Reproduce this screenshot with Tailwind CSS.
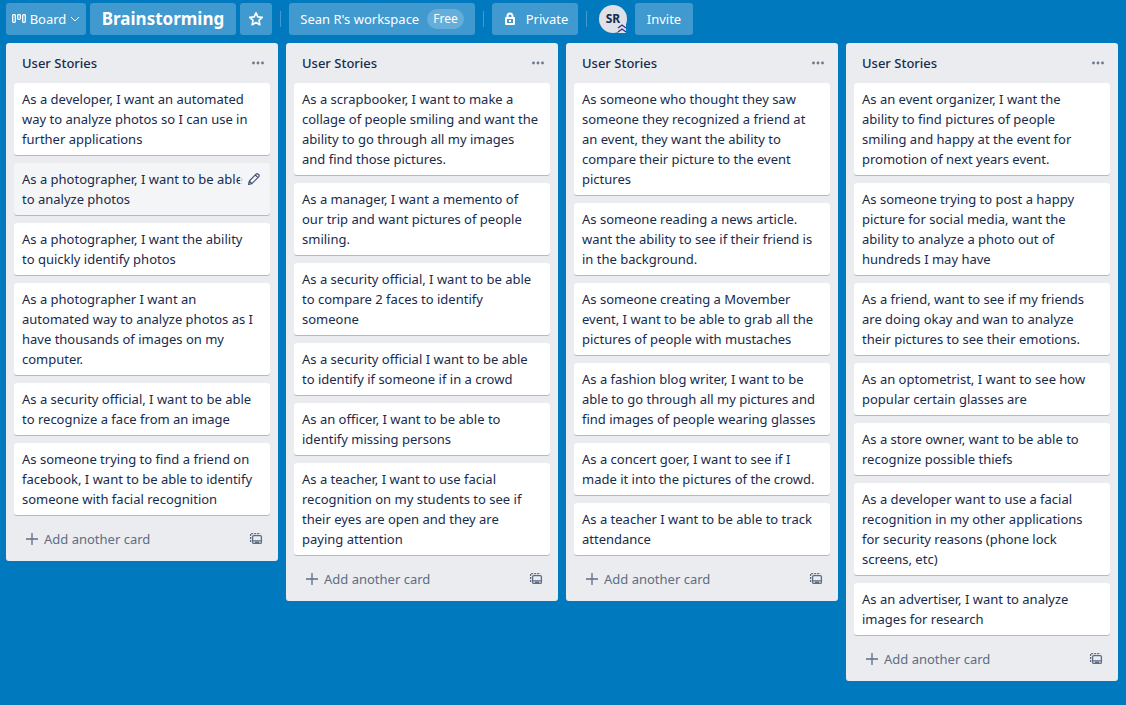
<!DOCTYPE html>
<html lang="en">
<head>
<meta charset="utf-8">
<title>Brainstorming</title>
<script src="https://cdn.jsdelivr.net/npm/@tailwindcss/browser@4"></script>
</head>
<body class="flex min-h-screen flex-col bg-[#0079bf] font-['Segoe_UI','Noto_Sans',sans-serif] text-[13px] leading-5 text-[#172b4d]">
<header class="flex h-[43px] shrink-0 items-start gap-1 px-1.5 pt-[3px] text-white">
  <button class="flex h-8 w-20 items-center justify-center gap-1 rounded-[3px] bg-[#4099cf]">
    <svg class="h-3 w-3.5 shrink-0" viewBox="0 0 14 12" fill="none" stroke="currentColor" stroke-width="1.3"><rect x=".7" y="1.7" width="2.6" height="7.6" rx=".7"/><rect x="5.7" y="1.7" width="2.6" height="4.6" rx=".7"/><rect x="10.7" y="1.7" width="2.6" height="7.6" rx=".7"/></svg>
    Board
    <svg class="h-2 w-2.5 shrink-0" viewBox="0 0 10 8" fill="none" stroke="currentColor" stroke-width="1"><path d="m1 2 4 4 4-4"/></svg>
  </button>
  <h1 class="flex h-8 w-[146px] items-center justify-center rounded-[3px] bg-[#4099cf] text-[17px] font-bold">Brainstorming</h1>
  <button aria-label="Star board" class="flex size-8 items-center justify-center rounded-[3px] bg-[#4099cf]">
    <svg class="size-4" viewBox="0 0 16 16" fill="none" stroke="currentColor" stroke-width="1.7" stroke-linejoin="round"><path d="m8 1.8 1.8 4 4.4.5-3.2 3 .8 4.4L8 11.5l-3.8 2.2.8-4.4-3.2-3 4.4-.5z"/></svg>
  </button>
  <span class="mx-1 mt-2 h-4 w-px bg-[#4099cf]"></span>
  <button class="flex h-8 w-[186px] items-center justify-center gap-2 rounded-[3px] bg-[#4099cf]">Sean R's workspace <span class="rounded-full bg-[#66add9] px-1.5 text-xs leading-5">Free</span></button>
  <span class="mx-1 mt-2 h-4 w-px bg-[#4099cf]"></span>
  <button class="flex h-8 w-[86px] items-center justify-center gap-2 rounded-[3px] bg-[#4099cf]">
    <svg class="size-4 shrink-0" viewBox="0 0 16 16"><path d="M5.5 7V5a2.5 2.5 0 0 1 5 0v2" fill="none" stroke="currentColor" stroke-width="2"/><path fill="currentColor" fill-rule="evenodd" d="M4 6h8a1 1 0 0 1 1 1v6a1 1 0 0 1-1 1H4a1 1 0 0 1-1-1V7a1 1 0 0 1 1-1zm1 2v4h6V8z"/><path fill="currentColor" d="M7 9h2v2H7z"/></svg>
    Private
  </button>
  <span class="mx-1 mt-2 h-4 w-px bg-[#4099cf]"></span>
  <button aria-label="Sean R" class="relative mx-1 mt-0.5 size-7 rounded-full bg-[#dfe1e6] text-xs font-bold text-[#172b4d]">SR
    <svg class="absolute right-0 bottom-0 size-2.5" viewBox="0 0 10 10"><path fill="#dfe1e6" d="M1 1h8v9H1z"/><path fill="none" stroke="#403294" stroke-width="1.4" d="m1 5 4-3 4 3M1 9l4-3 4 3"/></svg>
  </button>
  <button class="flex h-8 w-[58px] items-center justify-center rounded-[3px] bg-[#4099cf]">Invite</button>
</header>
<main id="board" class="flex flex-1 items-start gap-2 px-1.5 pb-6"></main>
<script>
const lists = [
  ["As a developer, I want an automated\nway to analyze photos so I can use in\nfurther applications",
   "*As a photographer, I want to be able\nto analyze photos",
   "As a photographer, I want the ability\nto quickly identify photos",
   "As a photographer I want an\nautomated way to analyze photos as I\nhave thousands of images on my\ncomputer.",
   "As a security official, I want to be able\nto recognize a face from an image",
   "As someone trying to find a friend on\nfacebook, I want to be able to identify\nsomeone with facial recognition"],
  ["As a scrapbooker, I want to make a\ncollage of people smiling and want the\nability to go through all my images\nand find those pictures.",
   "As a manager, I want a memento of\nour trip and want pictures of people\nsmiling.",
   "As a security official, I want to be able\nto compare 2 faces to identify\nsomeone",
   "As a security official I want to be able\nto identify if someone if in a crowd",
   "As an officer, I want to be able to\nidentify missing persons",
   "As a teacher, I want to use facial\nrecognition on my students to see if\ntheir eyes are open and they are\npaying attention"],
  ["As someone who thought they saw\nsomeone they recognized a friend at\nan event, they want the ability to\ncompare their picture to the event\npictures",
   "As someone reading a news article.\nwant the ability to see if their friend is\nin the background.",
   "As someone creating a Movember\nevent, I want to be able to grab all the\npictures of people with mustaches",
   "As a fashion blog writer, I want to be\nable to go through all my pictures and\nfind images of people wearing glasses",
   "As a concert goer, I want to see if I\nmade it into the pictures of the crowd.",
   "As a teacher I want to be able to track\nattendance"],
  ["As an event organizer, I want the\nability to find pictures of people\nsmiling and happy at the event for\npromotion of next years event.",
   "As someone trying to post a happy\npicture for social media, want the\nability to analyze a photo out of\nhundreds I may have",
   "As a friend, want to see if my friends\nare doing okay and wan to analyze\ntheir pictures to see their emotions.",
   "As an optometrist, I want to see how\npopular certain glasses are",
   "As a store owner, want to be able to\nrecognize possible thiefs",
   "As a developer want to use a facial\nrecognition in my other applications\nfor security reasons (phone lock\nscreens, etc)",
   "As an advertiser, I want to analyze\nimages for research"]
];
const card = t => t[0] === "*"
  ? `<li class="relative rounded-[3px] bg-[#f4f5f7] px-2 py-1.5 whitespace-pre shadow-[0_1px_0_#b3bac5]">${t.slice(1)}<button aria-label="Edit card" class="absolute top-0.5 right-0.5 flex size-7 items-center justify-center bg-[#f4f5f7]/80 text-[#42526e]"><svg class="size-3.5" viewBox="0 0 14 14" fill="none" stroke="currentColor" stroke-width="1.1" stroke-linejoin="round"><path d="m1.5 12.5.8-3.5 7-7q.8-.8 1.6 0l1 1q.8.8 0 1.6l-7 7zM8.3 3l2.7 2.7M2.3 9l2.6 2.6"/></svg></button></li>`
  : `<li class="rounded-[3px] bg-white px-2 py-1.5 whitespace-pre shadow-[0_1px_0_#b3bac5]">${t}</li>`;
document.getElementById("board").innerHTML = lists.map(cards => `
<section class="w-68 shrink-0 rounded-[3px] bg-[#ebecf0] px-2 pb-1.5">
  <div class="flex h-10 items-center justify-between pr-1 pl-2">
    <h2 class="font-medium">User Stories</h2>
    <button aria-label="List actions" class="flex size-4 items-center justify-center text-[#6b778c]"><svg class="size-4" viewBox="0 0 16 16" fill="currentColor"><circle cx="3.5" cy="8" r="1.4"/><circle cx="8" cy="8" r="1.4"/><circle cx="12.5" cy="8" r="1.4"/></svg></button>
  </div>
  <ul class="flex flex-col gap-2">${cards.map(card).join("")}</ul>
  <div class="mt-2 flex h-8 items-center justify-between pr-1.5 pl-3 text-[#5e6c84]">
    <button class="flex items-center gap-1.5"><svg class="size-3" viewBox="0 0 12 12" stroke="currentColor" stroke-width="1.3"><path d="M0 6h12M6 0v12"/></svg>Add another card</button>
    <button aria-label="Create from template"><svg class="block size-4" viewBox="0 0 16 16" fill="none" stroke="currentColor" stroke-width="1.3"><path stroke-dasharray="2 1" d="M2.6 11V2.6h9.8"/><rect x="4.6" y="4.6" width="8.8" height="7.8" rx="1.2"/><path d="M4.6 9.8h8.8M7 11.5h4"/></svg></button>
  </div>
</section>`).join("");
</script>
</body>
</html>
